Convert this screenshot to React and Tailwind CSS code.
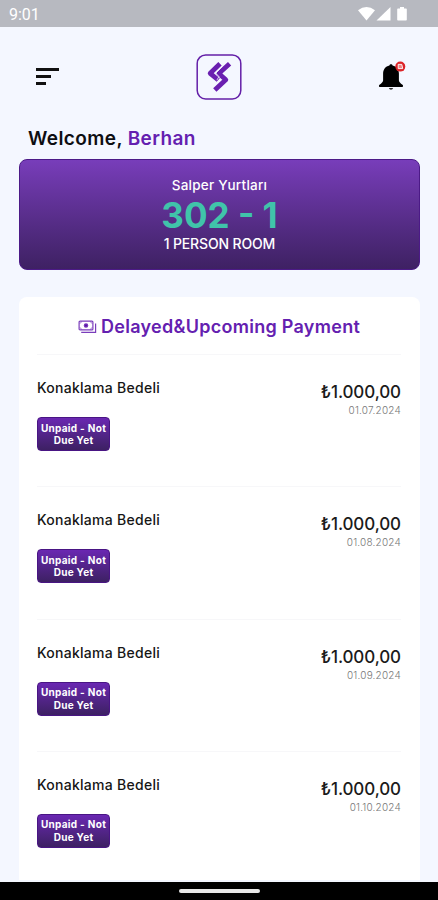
const PAYMENTS = [
  { id: 1, title: 'Konaklama Bedeli', amount: '₺1.000,00', date: '01.07.2024' },
  { id: 2, title: 'Konaklama Bedeli', amount: '₺1.000,00', date: '01.08.2024' },
  { id: 3, title: 'Konaklama Bedeli', amount: '₺1.000,00', date: '01.09.2024' },
  { id: 4, title: 'Konaklama Bedeli', amount: '₺1.000,00', date: '01.10.2024' },
];

function StatusBar() {
  return (
    <div className="flex h-[27px] shrink-0 items-center justify-between bg-[#b7b9c0] pl-[9px] pr-[30px]">
      <span className="pt-[2px] font-['Roboto',sans-serif] text-[16px] leading-none text-white">9:01</span>
      <svg width="50" height="16" viewBox="0 0 50 16" fill="#fff">
        <path d="M0 4.2Q8.5-2.2 17 4.2L8.5 14.5Z" />
        <path d="M32.5 1v13.500H18.500Z" />
        <path d="M40 2.400h2V1h4v1.400h2q.8 0 .8.800v10.500q0 .8-.8.800h-8q-.8 0-.8-.800V3.200q0-.8.8-.800Z" />
      </svg>
    </div>
  );
}

function Logo() {
  return (
    <svg width="46" height="46" viewBox="0 0 46 46" fill="none">
      <rect x="1.200" y="0.900" width="43.600" height="44" rx="8.500" stroke="#6420a8" strokeWidth="1.500" />
      <g stroke="#6a1fb0" strokeWidth="4.800" strokeLinejoin="round">
        <path d="M24 9.800 14.200 19.300l8 6.700" />
        <path d="M33.600 9.800 22.800 19.500l7 6.300-11 10.300" />
      </g>
      <path d="m26.300 12.600-6.500 6.600 3.200 3.400-2.200 3.600" stroke="#f4f7ff" strokeWidth=".8" />
    </svg>
  );
}

function Bell() {
  return (
    <svg width="30" height="32" viewBox="0 0 30 32">
      <path
        d="M13 3.300c.8 0 1.400.5 1.600 1.300 3.900.9 6.300 4 6.300 8v6.900c0 1.500 1.500 2.700 3.600 4.300.7.6.9 2.200-.3 2.200H1.800c-1.200 0-1-1.600-.3-2.200 2.100-1.600 3.600-2.800 3.600-4.300v-6.900c0-4 2.400-7.100 6.300-8 .2-.8.8-1.300 1.600-1.300Z"
        fill="#000"
      />
      <path d="M10.800 27h4.400q-.6 1.700-2.200 1.700t-2.200-1.700Z" fill="#333" />
      <circle cx="22.300" cy="5.600" r="5" fill="#dc2327" />
      <path d="M20.200 3.400h3.600l.9 4.200h-4.500Z" fill="#e98486" stroke="#fff" strokeWidth=".9" />
    </svg>
  );
}

function MoneyIcon() {
  return (
    <svg width="19" height="14" viewBox="0 0 19 14" fill="none" stroke="#7a3dbb" strokeWidth="1.200">
      <rect x="1.100" y="1.100" width="13.800" height="8.800" rx="1" />
      <path d="M17.600 3.500v8.900H3.200" />
      <path d="M1.500 3.300q1.800 0 2-1.800M14.500 3.300q-1.800 0-2-1.800M1.500 7.700q1.800 0 2 1.800M14.500 7.700q-1.800 0-2 1.800" strokeWidth=".6" />
      <circle cx="8" cy="5.500" r="1.700" fill="#5a12a5" />
    </svg>
  );
}

function PaymentRow({ title, amount, date }) {
  return (
    <div className="flex h-[132.300px] shrink-0 items-start justify-between border-t border-[#f7f7f9]">
      <div className="pt-[24px]">
        <p className="whitespace-nowrap text-[14px] font-medium leading-[18px] tracking-[0.27px] text-[#161616]">{title}</p>
        <div className="mt-[20px] flex h-[34px] w-[73px] flex-col justify-center rounded-[4px] border border-[#491584] bg-linear-to-b from-[#6a27b2] to-[#3d2063] text-center text-[10px] font-bold leading-[12.500px] tracking-[0.3px] text-white">
          <span className="whitespace-nowrap">Unpaid - Not</span>
          <span className="whitespace-nowrap">Due Yet</span>
        </div>
      </div>
      <div className="pt-[27px] text-right">
        <p className="text-[17px] font-medium leading-[21px] tracking-[-0.1px] text-[#1b1b1b]">{amount}</p>
        <p className="text-[10px] font-light leading-[15px] tracking-[0.2px] text-[#777]">{date}</p>
      </div>
    </div>
  );
}

export default function App() {
  return (
    <div className="flex h-[900px] w-full flex-col overflow-hidden bg-[#f4f7ff] font-['Inter',sans-serif]">
      <StatusBar />

      <header className="flex h-[99px] shrink-0 items-center justify-between pl-[36px] pr-[30px]">
        <div className="flex w-[24px] flex-col gap-[4px]">
          <span className="h-[3px] w-[23px] bg-[#111]" />
          <span className="h-[3px] w-[15px] bg-[#111]" />
          <span className="h-[3px] w-[10px] bg-[#111]" />
        </div>
        <Logo />
        <Bell />
      </header>

      <main className="flex min-h-0 flex-1 flex-col pl-[19px] pr-[18px]">
        <h1 className="h-[33px] shrink-0 whitespace-nowrap pl-[9px] text-[19px] font-semibold leading-[26px] tracking-[0.4px] text-[#0e0e12]">
          Welcome, <span className="text-[#6420b0]">Berhan</span>
        </h1>

        <section className="flex h-[111px] shrink-0 flex-col items-center rounded-[8px] border border-[#4c1a87] bg-linear-to-b from-[#783dba] to-[#3e2163] pt-[16px] text-white">
          <p className="text-[13.500px] font-medium leading-[18px] tracking-[0.25px]">Salper Yurtları</p>
          <p className="text-[35px] font-bold leading-[42px] text-[#40c4aa]">302 - 1</p>
          <p className="text-[14px] font-medium leading-[16px] tracking-[-0.15px]">1 PERSON ROOM</p>
        </section>

        <section className="mt-[27px] flex h-[583px] shrink-0 flex-col overflow-hidden rounded-t-[8px] bg-white pl-[18px] pr-[19px]">
          <div className="flex h-[57px] shrink-0 items-center justify-center gap-[4px] pt-[2px]">
            <MoneyIcon />
            <h2 className="whitespace-nowrap text-[18px] font-semibold tracking-[0.28px] text-[#6420b0]">Delayed&amp;Upcoming Payment</h2>
          </div>
          {PAYMENTS.map((p) => (
            <PaymentRow key={p.id} title={p.title} amount={p.amount} date={p.date} />
          ))}
        </section>
      </main>

      <div className="flex h-[18px] shrink-0 items-center justify-center bg-black">
        <div className="h-[4px] w-[81px] rounded-full bg-[#e8e8e8]" />
      </div>
    </div>
  );
}
